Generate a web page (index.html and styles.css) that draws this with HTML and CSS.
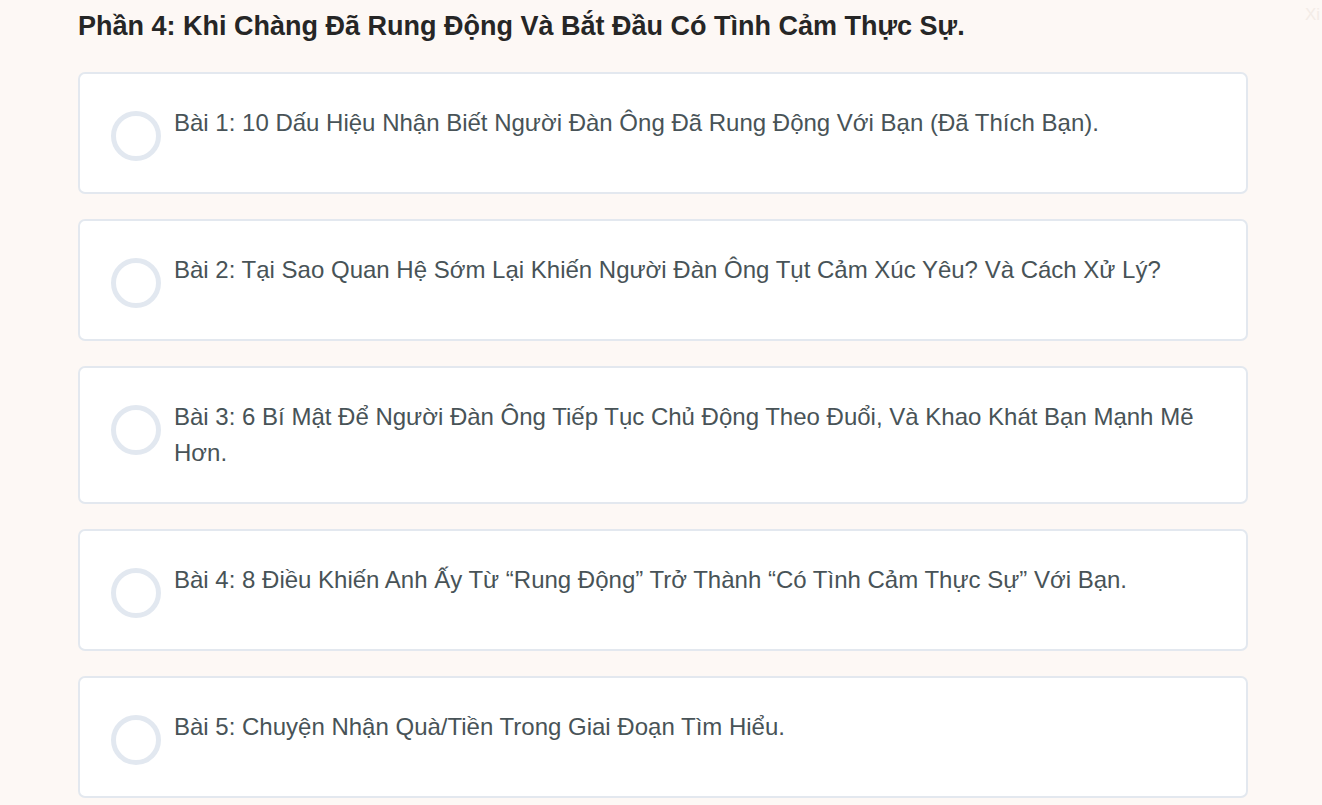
FILE: index.html
```html
<!DOCTYPE html>
<html lang="vi">
<head>
<meta charset="utf-8">
<title>Phần 4</title>
<link rel="stylesheet" href="styles.css">
</head>
<body>
<div class="ghost">Xi</div>
<main class="section">
  <h2 class="section-title">Phần 4: Khi Chàng Đã Rung Động Và Bắt Đầu Có Tình Cảm Thực Sự.</h2>
  <ul class="lessons">
    <li class="lesson"><span class="check"></span><span class="lesson-text">Bài 1: 10 Dấu Hiệu Nhận Biết Người Đàn Ông Đã Rung Động Với Bạn (Đã Thích Bạn).</span></li>
    <li class="lesson"><span class="check"></span><span class="lesson-text">Bài 2: Tại Sao Quan Hệ Sớm Lại Khiến Người Đàn Ông Tụt Cảm Xúc Yêu? Và Cách Xử Lý?</span></li>
    <li class="lesson"><span class="check"></span><span class="lesson-text">Bài 3: 6 Bí Mật Để Người Đàn Ông Tiếp Tục Chủ Động Theo Đuổi, Và Khao Khát Bạn Mạnh Mẽ Hơn.</span></li>
    <li class="lesson"><span class="check"></span><span class="lesson-text">Bài 4: 8 Điều Khiến Anh Ấy Từ “Rung Động” Trở Thành “Có Tình Cảm Thực Sự” Với Bạn.</span></li>
    <li class="lesson"><span class="check"></span><span class="lesson-text">Bài 5: Chuyện Nhận Quà/Tiền Trong Giai Đoạn Tìm Hiểu.</span></li>
  </ul>
</main>
</body>
</html>
```
FILE: styles.css
```css
* { box-sizing: border-box; }
html, body { margin: 0; padding: 0; }
body {
  background: #fdf8f5;
  font-family: "Liberation Sans", Arial, sans-serif;
  height: 805px;
  overflow: hidden;
  position: relative;
}
.ghost {
  position: absolute;
  top: 5px;
  left: 1305px;
  font-size: 17px;
  color: #f3ece7;
}
.section {
  width: 1170px;
  margin-left: 78px;
  padding-top: 8px;
}
.section-title {
  margin: 0 0 28px 0;
  font-size: 27px;
  line-height: 36px;
  font-weight: 700;
  color: #262626;
}
.lessons {
  list-style: none;
  margin: 0;
  padding: 0;
  display: flex;
  flex-direction: column;
  gap: 25px;
}
.lesson {
  display: flex;
  align-items: flex-start;
  gap: 13px;
  background: #ffffff;
  border: 2px solid #e3e8ef;
  border-radius: 7px;
  padding: 31px 40px 31px 31px;
}
.check {
  flex: none;
  width: 50px;
  height: 50px;
  margin-top: 6px;
  border: 5px solid #e2e8f0;
  border-radius: 50%;
}
.lesson-text {
  font-size: 24px;
  line-height: 36px;
  color: #485357;
}
```
